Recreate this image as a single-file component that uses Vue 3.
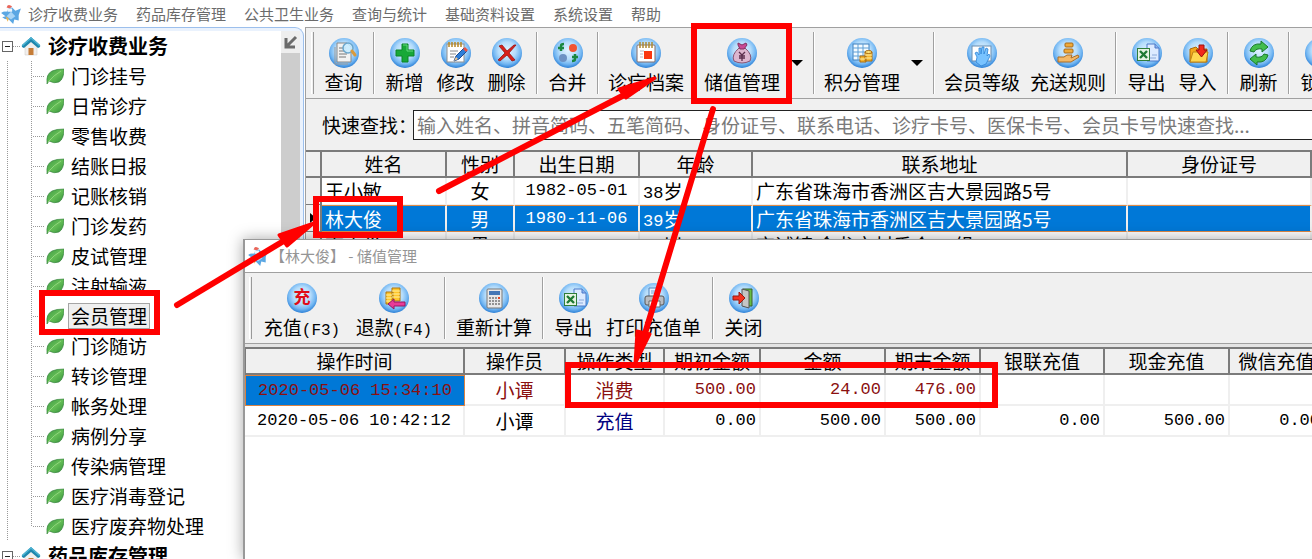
<script setup>
import { ref } from 'vue'

const menus = ['诊疗收费业务', '药品库存管理', '公共卫生业务', '查询与统计', '基础资料设置', '系统设置', '帮助']

const items = [
  '门诊挂号', '日常诊疗', '零售收费', '结账日报', '记账核销', '门诊发药', '皮试管理', '注射输液',
  '会员管理', '门诊随访', '转诊管理', '帐务处理', '病例分享', '传染病管理', '医疗消毒登记', '医疗废弃物处理'
]
const current = ref('会员管理')
const keyword = ref('')

const sheet = '<path d="M15 6h8l4 4v13H15z" fill="#dceaff" stroke="#4a78c8"/><path d="M23 6v4h4" fill="#8fb4ee" stroke="#4a78c8"/><path d="M18 20h6M20 17h5" stroke="#8aa8d8"/><rect x="5.500" y="10.500" width="12" height="12" fill="#e6f4e2" stroke="#2f7d3a"/><path d="M8 13l7 7M15 13l-7 7" stroke="#1f7a33" stroke-width="2.400"/>'

const glyphs = {
  query: '<path d="M8 5h10l4 4v15H8z" fill="#f2f2f2" stroke="#888"/><path d="M6 9v17h13" fill="none" stroke="#999"/><path d="M10 10h7M10 13h8M10 16h8M10 19h7" stroke="#777"/><circle cx="19" cy="10" r="5" fill="#c9ecff" fill-opacity=".9" stroke="#6aa6cc" stroke-width="1.500"/><path d="M23 13l3 4" stroke="#d99a3c" stroke-width="3" stroke-linecap="round"/>',
  add: '<path d="M12 6h6v6h6v6h-6v6h-6v-6H6v-6h6z" fill="#18a838" stroke="#0b8427"/><path d="M13 7h4v6h6" fill="none" stroke="#63d77c"/>',
  edit: '<rect x="6" y="6" width="17" height="18" fill="#fff" stroke="#8d8d8d"/><path d="M8 4v5M11 4v5M14 4v5M17 4v5M20 4v5" stroke="#b78622" stroke-width="1.500"/><path d="M9 13h8M9 16h6M9 19h4" stroke="#888"/><path d="M13 23l2-5 8-8 3 3-8 8z" fill="#2d7ed8" stroke="#1d4d93"/><path d="M22 11l2-2 3 3-2 2z" fill="#ee5140"/><path d="M13 23l2-4 2 2z" fill="#f5c98b"/>',
  remove: '<path d="M7 8l3-1 5 6 7-6h2l-7 8 6 7-3 1-5-6-7 6-2-1 7-7z" fill="#d8201c" stroke="#981410" stroke-width=".800"/>',
  merge: '<circle cx="20" cy="10" r="4" fill="#f25432"/><circle cx="10" cy="20" r="4" fill="#6d92c4"/><path d="M8 13V8q0-2 3-2M5 10h6" fill="none" stroke="#1a8740" stroke-width="2.500"/><path d="M22 16v5q0 2-3 2M19 19h6" fill="none" stroke="#1a8740" stroke-width="2.500"/>',
  record: '<rect x="6" y="7" width="18" height="17" rx="1" fill="#fff" stroke="#806b68"/><path d="M9 4v6M12 4v6M15 4v6M18 4v6M21 4v6" stroke="#ad8a30" stroke-width="1.500"/><path d="M9 13h4M9 16h3M9 19h3" stroke="#b9b9c4"/><rect x="13" y="13" width="8" height="8" fill="#fa3710"/>',
  purse: '<path d="M12 10Q4 17 7 23q8 4 16 0 3-6-5-13z" fill="#ddb6cf" stroke="#895473"/><path d="M11 5l4 2 4-2 1 2-3 4h-4l-2-4z" fill="#c94b95" stroke="#833061"/><path d="M12 14l3 3 3-3M15 17v6M12 18h6M12 20h6" fill="none" stroke="#5b2f4d" stroke-width="1.300"/>',
  points: '<rect x="6" y="6" width="16" height="16" fill="#f4fbff" stroke="#3a7ebe"/><path d="M6 10h16M6 14h16M6 18h16M11 6v16M16 6v16" stroke="#5e9fd6"/><path d="M13 18v6h6v-6zM18 14v9h7v-9z" fill="#f4b52e" stroke="#a86d13"/><path d="M18 17h7M18 20h7M13 21h5" stroke="#fff0a5"/><ellipse cx="21.500" cy="14" rx="3.500" ry="1.500" fill="#ffe37a" stroke="#a86d13"/>',
  level: '<rect x="5" y="8" width="19" height="15" fill="#fff" stroke="#668bb0"/><path d="M10 19l-2-4 2-1 2 3v-7h2v6l1-7h2v7l2-6 2 1-1 7 2-2 1 2-4 8-5 2-5-4z" fill="#79c3ff" stroke="#2c83d5" stroke-width=".800"/>',
  rule: '<rect x="12" y="5" width="8" height="4" rx="1" fill="#f0aa39" stroke="#a66916"/><rect x="11" y="11" width="9" height="4" rx="1" fill="#f0aa39" stroke="#a66916"/><path d="M5 19h6l3-2h5l-1 3 7-3 1 2-8 5H5z" fill="#f3b867" stroke="#ab6d25"/>',
  excel: sheet,
  import: '<path d="M7 11l6-2 2 2h9v13H7z" fill="#f4a71c" stroke="#a86a0c"/><path d="M7 24l3-10h15l-2 10z" fill="#ffd650" stroke="#bf8214"/><path d="M16 7h5v5h3l-5.500 7-5.500-7h3z" fill="#f2281c" stroke="#981010"/>',
  refresh: '<path d="M6 13q2-8 11-7V3l7 6-6 5v-3q-6-1-8 3z" fill="#42bd4c" stroke="#16792a"/><path d="M24 17q-2 8-11 7v3l-7-6 6-5v3q6 1 8-3z" fill="#42bd4c" stroke="#16792a"/>',
  lock: '<rect x="8" y="13" width="14" height="11" fill="#c8c8c8" stroke="#666"/><path d="M11 13V9q4-5 8 0v4" fill="none" stroke="#777" stroke-width="2"/>',
  charge: '<text x="15" y="20" text-anchor="middle" font-family="Noto Sans CJK SC, sans-serif" font-weight="700" font-size="17" fill="#e00d18">充</text>',
  refund: '<path d="M13 5h8v13h-8zM7 9h7v12H7z" fill="#ffc62b" stroke="#aa7412"/><path d="M13 8h8M13 11h8M13 14h8M7 12h6M7 15h6M7 18h6" stroke="#fff1a5"/><path d="M9 21l6-5v3h11v4H15v3z" fill="#e83b98" stroke="#94195f"/>',
  calc: '<rect x="8" y="6" width="15" height="19" rx="1" fill="#e9e9e9" stroke="#777"/><rect x="10" y="8" width="11" height="4" fill="#4577b5"/><path d="M10 15h11M10 18h11M10 21h11" stroke="#777" stroke-width="1.700" stroke-dasharray="2 1"/><path d="M19 15h2" stroke="#e64522" stroke-width="2"/>',
  print: '<path d="M10 5h10v10H10z" fill="#e5f2ff" stroke="#4f84bf"/><path d="M12 8h6M12 10h6" stroke="#70a4d8"/><rect x="6" y="13" width="19" height="9" rx="2" fill="#b9bcc1" stroke="#555"/><path d="M10 18h11v6H10z" fill="#f8f8f8" stroke="#666"/>',
  exit: '<path d="M14 6h9v17h-9z" fill="#68bd42" stroke="#365f2b"/><path d="M13 6l7 2v17l-7-2z" fill="#c5c5c5" stroke="#555"/><path d="M4 13h6v-4l6 6-6 6v-4H4z" fill="#f33320" stroke="#991811"/>'
}

const tools = [
  [{ t: '查询', i: 'query', w: 'w2' }],
  [{ t: '新增', i: 'add', w: 'w2' }, { t: '修改', i: 'edit', w: 'w2' }, { t: '删除', i: 'remove', w: 'w2' }],
  [{ t: '合并', i: 'merge', w: 'w2' }],
  [{ t: '诊疗档案', i: 'record', w: 'w4' }],
  [{ t: '储值管理', i: 'purse', w: 'w4', more: true }],
  [{ t: '积分管理', i: 'points', w: 'w4', more: true }],
  [{ t: '会员等级', i: 'level', w: 'w4' }, { t: '充送规则', i: 'rule', w: 'w4' }],
  [{ t: '导出', i: 'excel', w: 'w2' }, { t: '导入', i: 'import', w: 'w2' }],
  [{ t: '刷新', i: 'refresh', w: 'w2' }],
  [{ t: '锁定', i: 'lock', w: 'w2' }]
]

const dialogTools = [
  [{ t: '充值', k: '(F3)', i: 'charge', w: 'wk' }, { t: '退款', k: '(F4)', i: 'refund', w: 'wk' }],
  [{ t: '重新计算', i: 'calc', w: 'w4' }],
  [{ t: '导出', i: 'excel', w: 'w2' }, { t: '打印充值单', i: 'print', w: 'w5' }],
  [{ t: '关闭', i: 'exit', w: 'w2' }]
]

const members = [
  { name: '王小敏', sex: '女', birth: '1982-05-01', age: '38', addr: '广东省珠海市香洲区吉大景园路5号' },
  { name: '林大俊', sex: '男', birth: '1980-11-06', age: '39', addr: '广东省珠海市香洲区吉大景园路5号', on: true },
  { name: '李小俊', sex: '男', birth: '', age: '42', addr: '齐诚镇 金龙市村委会 一组' }
]

const recordHeads = ['操作时间', '操作员', '操作类型', '期初金额', '金额', '期末金额', '银联充值', '现金充值', '微信充值']
const records = [
  { time: '2020-05-06 15:34:10', user: '小谭', type: '消费', nums: ['500.00', '24.00', '476.00', '', '', ''], spend: true },
  { time: '2020-05-06 10:42:12', user: '小谭', type: '充值', nums: ['0.00', '500.00', '500.00', '0.00', '500.00', '0.00'] }
]
</script>

<template>
  <div class="app">
    <svg class="defs" width="0" height="0" aria-hidden="true">
      <defs>
        <radialGradient id="orb" cx="50%" cy="42%" r="58%">
          <stop offset="0" stop-color="#e2f3ff" />
          <stop offset=".5" stop-color="#b4dcfb" />
          <stop offset=".78" stop-color="#72b6f2" />
          <stop offset="1" stop-color="#2c80d6" />
        </radialGradient>
        <linearGradient id="leaf" x1="0" y1="0" x2="1" y2="1">
          <stop offset="0" stop-color="#3f9a45" />
          <stop offset=".5" stop-color="#63bd55" />
          <stop offset="1" stop-color="#2f8a38" />
        </linearGradient>
        <symbol id="bird" viewBox="0 0 20 20">
          <path d="M1 9q3-2 5-1 1-4 5-4l3 3 5-2-2 6v5l-4-1-1 4-4-4q-4 0-6-2l3-1z" fill="#5ba7e3" />
          <path d="M6 12l4-4 4 4-4 3z" fill="#a9d5f6" />
          <path d="M6 4q1-3 3-2l2 1-2 2z" fill="#e9665a" />
          <path d="M5 12l3 2-1 3z" fill="#f1b44e" />
          <path d="M6 5h5v3H7z" fill="#eef6fc" />
        </symbol>
        <symbol id="house" viewBox="0 0 20 20">
          <path d="M4 9l6-5 6 5v10H4z" fill="#f2efed" stroke="#c9c4c0" stroke-width=".500" />
          <path d="M7.500 12h5v7h-5z" fill="#c57c36" />
          <path d="M10 1l9 8q1 2-2 3l-7-6-7 6q-3-1-2-3z" fill="#1f87ad" />
          <path d="M10 1l9 8q0 1-1 1l-8-7-8 7q-1 0-1-1z" fill="#4db3d2" />
        </symbol>
      </defs>
    </svg>

    <nav class="menubar">
      <svg class="bird" aria-hidden="true"><use href="#bird" /></svg>
      <a v-for="m in menus" :key="m" href="#">{{ m }}</a>
    </nav>

    <div class="body">
      <aside class="side">
        <div class="tree">
          <a class="root" href="#">
            <span class="box"></span><span class="dash"></span>
            <svg class="house" aria-hidden="true"><use href="#house" /></svg>
            <b>诊疗收费业务</b>
          </a>
          <ul>
            <li v-for="n in items" :key="n">
              <svg class="leaf" viewBox="0 0 18 18" aria-hidden="true">
                <path d="M1 16Q0 7 6 4q4-2 12-2 0 10-5 13-5 2-10-1l-2 3z" fill="url(#leaf)" stroke="#2b7b34" stroke-width=".600" />
                <path d="M2 15Q8 8 15 4" fill="none" stroke="#a4e28c" stroke-width=".700" />
              </svg>
              <a href="#" :class="{ on: n === current }" @click.prevent="current = n">{{ n }}</a>
            </li>
          </ul>
          <a class="root" href="#">
            <span class="box"></span><span class="dash"></span>
            <svg class="house" aria-hidden="true"><use href="#house" /></svg>
            <b>药品库存管理</b>
          </a>
        </div>
        <div class="strip">
          <button type="button" aria-label="收起">
            <svg viewBox="0 0 14 14"><path d="M2 3v9h9M3 11l9-9" fill="none" stroke="#6b6b6b" stroke-width="3" /></svg>
          </button>
        </div>
      </aside>

      <main class="main">
        <div class="toolbar">
          <span class="grip"></span>
          <div v-for="(g, gi) in tools" :key="gi" class="group">
            <template v-for="b in g" :key="b.t">
              <button type="button" class="tool" :class="b.w">
                <svg viewBox="0 0 30 30" aria-hidden="true">
                  <circle cx="15" cy="15" r="15" fill="url(#orb)" />
                  <g fill="none" v-html="glyphs[b.i]"></g>
                </svg>
                <span>{{ b.t }}</span>
              </button>
              <button v-if="b.more" type="button" class="more" :aria-label="b.t"></button>
            </template>
          </div>
        </div>

        <div class="search">
          <label for="kw">快速查找：</label>
          <input id="kw" v-model="keyword" type="text" placeholder="输入姓名、拼音简码、五笔简码、身份证号、联系电话、诊疗卡号、医保卡号、会员卡号快速查找...">
        </div>

        <table class="grid members">
          <colgroup>
            <col class="c-mark"><col class="c-name"><col class="c-sex"><col class="c-birth"><col class="c-age"><col class="c-addr"><col>
          </colgroup>
          <thead>
            <tr><th></th><th>姓名</th><th>性别</th><th>出生日期</th><th>年龄</th><th>联系地址</th><th>身份证号</th></tr>
          </thead>
          <tbody>
            <tr v-for="m in members" :key="m.name" :class="{ sel: m.on }">
              <td class="mark"><i v-if="m.on"></i></td>
              <td>{{ m.name }}</td>
              <td class="mid">{{ m.sex }}</td>
              <td class="mid num">{{ m.birth }}</td>
              <td><span class="num age">{{ m.age }}</span>岁</td>
              <td>{{ m.addr }}</td>
              <td></td>
            </tr>
          </tbody>
        </table>
      </main>
    </div>

    <section class="dialog" role="dialog" aria-labelledby="dlg">
      <header>
        <svg class="bird" aria-hidden="true"><use href="#bird" /></svg>
        <span id="dlg">【林大俊】 - 储值管理</span>
      </header>
      <div class="toolbar">
        <span class="grip"></span>
        <div v-for="(g, gi) in dialogTools" :key="gi" class="group">
          <button v-for="b in g" :key="b.t" type="button" class="tool" :class="b.w">
            <svg viewBox="0 0 30 30" aria-hidden="true">
              <circle cx="15" cy="15" r="15" fill="url(#orb)" />
              <g fill="none" v-html="glyphs[b.i]"></g>
            </svg>
            <span>{{ b.t }}<span v-if="b.k" class="key">{{ b.k }}</span></span>
          </button>
        </div>
      </div>
      <table class="grid records">
        <colgroup>
          <col class="d-time"><col class="d-user"><col class="d-type"><col class="d-start"><col class="d-amt"><col class="d-end"><col class="d-bank"><col class="d-cash"><col>
        </colgroup>
        <thead>
          <tr><th v-for="h in recordHeads" :key="h">{{ h }}</th></tr>
        </thead>
        <tbody>
          <tr v-for="r in records" :key="r.time" :class="{ spend: r.spend }">
            <td class="mid time num">{{ r.time }}</td>
            <td class="mid">{{ r.user }}</td>
            <td class="mid type">{{ r.type }}</td>
            <td v-for="(n, i) in r.nums" :key="i" class="right num">{{ n }}</td>
          </tr>
        </tbody>
      </table>
    </section>

    <svg class="marks" width="1312" height="559" viewBox="0 0 1312 559" aria-hidden="true">
      <g fill="none" stroke="#f00" stroke-width="6">
        <rect x="42" y="293" width="115" height="39" />
        <rect x="316" y="199" width="84" height="36" />
        <rect x="694" y="26" width="95" height="75" />
        <rect x="568" y="365" width="427" height="40" />
      </g>
      <g stroke="#f00" stroke-width="6" stroke-linecap="round">
        <path d="M177 305L292 236" />
        <path d="M439 191L630 92" />
        <path d="M713 109L643 340" />
      </g>
      <g fill="#f00" stroke="#f00" stroke-width="3" stroke-linejoin="round">
        <path d="M314 223L279 235L287 246Z" />
        <path d="M655 78L619 89L626 98Z" />
        <path d="M635 364L637 331L650 334Z" />
      </g>
    </svg>
  </div>
</template>

<style>
body {
  overflow: hidden;
}
</style>

<style scoped>
.app {
  position: relative;
  height: 100vh;
  overflow: hidden;
  display: flex;
  flex-direction: column;
  background: #fff;
  color: #000;
  font: 19px/26px "Noto Sans CJK SC", sans-serif;
  white-space: nowrap;
}
.app *, .app *::before { box-sizing: border-box; }
.defs, .marks { position: absolute; left: 0; top: 0; }
.marks { pointer-events: none; }
a { color: inherit; text-decoration: none; }
button { font: inherit; color: inherit; background: none; border: 0; padding: 0; }

.menubar {
  flex: none;
  display: flex;
  align-items: center;
  gap: 18px;
  height: 27px;
  font-size: 15px;
  color: #6b6b6b;
}
.bird { width: 22px; height: 22px; flex: none; }
.menubar .bird { margin-right: -12px; }

.body { flex: 1; min-height: 0; display: flex; }
.side {
  flex: none;
  display: flex;
  width: 304px;
  overflow: hidden;
  padding: 3px 3px 0 0;
  background: #eaf2fd;
  border: solid #9cbfec;
  border-width: 1px 1px 0 0;
  border-radius: 0 9px 0 0;
}
.tree { flex: 1; background: #fff; }
.strip { width: 19px; background: #cdcdcd; }
.strip button { display: grid; place-items: center; width: 19px; height: 22px; background: #eee; }
.strip svg { width: 14px; height: 14px; }

.root { display: flex; align-items: center; height: 30px; }
.box {
  width: 11px;
  height: 11px;
  margin-left: 2px;
  border: 1px solid #666;
  background: linear-gradient(#222, #222) center / 5px 1px no-repeat;
}
.dash, li::before {
  height: 1px;
  background: repeating-linear-gradient(90deg, #999 0 1px, transparent 1px 2px);
}
.dash { width: 8px; }
.house { width: 20px; height: 20px; margin-right: 7px; }
.root b { font-size: 20px; font-weight: 700; }
ul {
  list-style: none;
  margin: 0;
  padding: 0 0 0 31px;
  background: repeating-linear-gradient(#999 0 1px, transparent 1px 2px) 7px 0 / 1px 100% no-repeat;
}
li {
  display: flex;
  align-items: center;
  height: 30px;
  background: repeating-linear-gradient(#999 0 1px, transparent 1px 2px) 0 0 / 1px 100% no-repeat;
}
li:last-child { background-size: 1px 50%; }
li::before { content: ""; width: 12px; margin: 0 1px 0 2px; }
.leaf { width: 18px; height: 18px; margin-right: 4px; }
li a { padding: 0 2px; border: 1px solid transparent; line-height: 24px; }
li a.on { background: #efefef; border-color: #a5a5a5; }

.main {
  flex: 1;
  min-width: 0;
  margin-left: 1px;
  overflow: hidden;
  background: #f0f0f0;
  border-left: 1px solid #a0a0a0;
}
.toolbar {
  display: flex;
  height: 72px;
  overflow: hidden;
  border: solid #a0a0a0;
  border-width: 1px 0;
}
.grip {
  flex: none;
  width: 3px;
  margin: 4px 4px 4px 5px;
  border-left: 1px solid #fff;
  border-right: 1px solid #999;
}
.group { flex: none; display: flex; }
.group + .group::before {
  content: "";
  width: 2px;
  margin: 4px;
  border-left: 1px solid #a0a0a0;
  border-right: 1px solid #fff;
}
.tool { display: flex; flex-direction: column; align-items: center; padding-top: 10px; }
.tool svg { width: 30px; height: 30px; flex: none; }
.tool > span { line-height: 28px; }
.w2 { width: 51px; }
.w4 { width: 86px; }
.w5 { width: 109px; }
.wk { width: 92px; }
.more { width: 24px; display: grid; place-items: center; }
.more::before {
  content: "";
  border: solid transparent;
  border-width: 6px 6px 0;
  border-top-color: #000;
}

.search { display: flex; align-items: center; height: 51px; padding-left: 16px; }
.search label { flex: none; width: 91px; }
.search input {
  flex: 1;
  min-width: 0;
  height: 30px;
  padding: 0 3px;
  border: 1px solid #222;
  border-right: 0;
  background: #fff;
  font: inherit;
}
.search input::placeholder { color: #7a7a7a; opacity: 1; }

.grid { width: 100%; table-layout: fixed; border-collapse: separate; border-spacing: 0; background: #fff; }
.grid th {
  height: 28px;
  padding: 0;
  font-weight: 400;
  line-height: 24px;
  background: #f0f0f0;
  border: solid #7b7b7b;
  border-width: 2px 2px 2px 0;
}
.grid td {
  height: 27px;
  padding: 0 3px;
  line-height: 24px;
  overflow: hidden;
  border: solid #efefef;
  border-width: 0 2px 1px 0;
}
.grid td.mid { text-align: center; }
.grid td.right { text-align: right; }
.num { font-family: "Liberation Mono", monospace; font-size: 17px; }
.age { line-height: 1; vertical-align: 1px; }
.key { font-family: "Liberation Mono", monospace; font-size: 16px; }

.c-mark { width: 16px; }
.c-name, .c-birth { width: 125px; }
.c-sex { width: 68px; }
.c-age { width: 113px; }
.c-addr { width: 375px; }
.grid td.mark { padding: 0; background: #f0f0f0; border-color: #7b7b7b; }
.mark i { display: block; width: 0; border: solid transparent; border-width: 5px 0 5px 6px; border-left-color: #000; margin-left: 4px; }
.grid .sel td:not(.mark) {
  background: #0078d7;
  color: #fff;
  border-top: 1px solid #e08a45;
  border-bottom: 1px solid #e08a45;
}

.dialog {
  position: absolute;
  left: 243px;
  right: -13px;
  top: 239px;
  bottom: 0;
  background: #fff;
  border: solid #999;
  border-width: 1px 0 0 2px;
  box-shadow: 0 0 14px rgba(0, 0, 0, .35);
}
.dialog header { display: flex; align-items: center; height: 32px; font-size: 15px; color: #959595; }
.dialog header .bird { margin-left: 2px; margin-right: 1px; }
.dialog .toolbar { height: 72px; background: #f0f0f0; }
.dialog .grip { margin-left: 4px; }
.dialog .w4 { width: 88px; }
.records { border-top: 3px solid #e4e4e4; }
.records th:first-child { border-left: 1px solid #7b7b7b; }
.records td { height: 31px; border-bottom-width: 2px; }
.d-time { width: 220px; }
.d-user { width: 101px; }
.d-type { width: 99px; }
.d-start { width: 96px; }
.d-amt, .d-cash { width: 125px; }
.d-end { width: 95px; }
.d-bank { width: 124px; }
.spend { color: #8b1010; }
.grid .spend .time { background: #0078d7; border: 1px solid #d98243; }
.type { color: #000080; }
.spend .type { color: #8b1010; }
</style>
